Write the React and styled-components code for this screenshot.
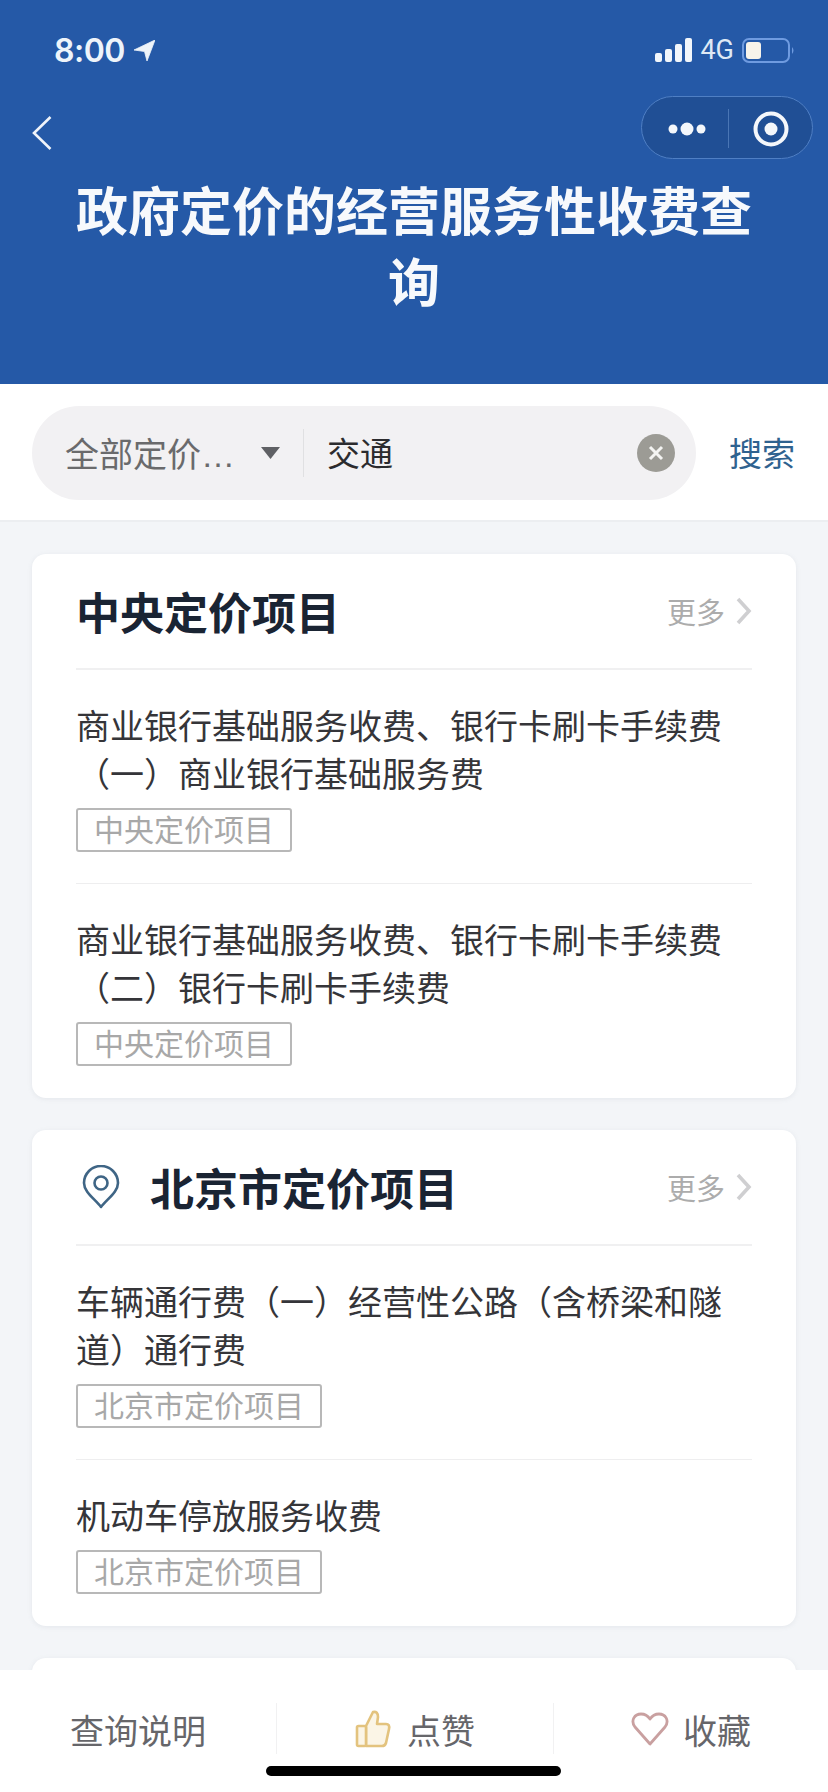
import React from 'react'
import styled, { createGlobalStyle } from 'styled-components'

const GlobalStyle = createGlobalStyle`
  * { box-sizing: border-box; }
  html, body { margin: 0; padding: 0; background: #fff; }
  body { font-family: "Liberation Sans", "Noto Sans CJK SC", sans-serif; }
`

const Page = styled.div`
  width: 828px;
  height: 1792px;
  display: flex;
  flex-direction: column;
  overflow: hidden;
  background: #f3f5f8;
`

const Header = styled.header`
  height: 384px;
  flex: none;
  padding-top: 30px;
  background: #2559a7;
  color: #fff;
`

const StatusBar = styled.div`
  height: 40px;
  padding: 0 33px 0 54px;
  display: flex;
  align-items: center;
  justify-content: space-between;
`

const Clock = styled.div`
  display: flex;
  align-items: center;
  gap: 9px;
  font-family: Inter, sans-serif;
  font-size: 32px;
  font-weight: 600;
  letter-spacing: -0.5px;
  color: #eef4fa;
`

const StatusIcons = styled.div`
  display: flex;
  align-items: center;
  gap: 8px;
  font-family: Roboto, sans-serif;
  font-size: 27px;
  color: #dfe9f5;
`

const NavBar = styled.div`
  height: 63px;
  margin-top: 26px;
  padding: 0 15px 0 32px;
  display: flex;
  align-items: center;
  justify-content: space-between;
`

const BackButton = styled.div`
  display: flex;
  padding-top: 11px;
`

const Capsule = styled.div`
  width: 172px;
  height: 63px;
  padding-top: 2px;
  display: flex;
  align-items: center;
  border: 1px solid #4f7fc4;
  border-radius: 32px;
  background: #204f95;
`

const CapsuleSide = styled.div`
  flex: 1;
  height: 39px;
  display: flex;
  align-items: center;
  justify-content: center;
  padding-left: ${props => (props.$divided ? '2px' : '4px')};
  border-left: ${props => (props.$divided ? '1px solid #4a76b5' : 'none')};
`

const Title = styled.h1`
  margin: 19px 0 0;
  padding: 0 64px;
  font-size: 52px;
  line-height: 71px;
  font-weight: 700;
  text-align: center;
  color: #f7f9fc;
`

const SearchSection = styled.div`
  height: 138px;
  flex: none;
  padding: 22px 33px 0 32px;
  display: flex;
  align-items: flex-start;
  justify-content: space-between;
  background: #fff;
  border-bottom: 2px solid #eceef1;
`

const SearchPill = styled.div`
  width: 664px;
  height: 94px;
  padding: 0 21px 0 33px;
  display: flex;
  align-items: center;
  border-radius: 47px;
  background: #f2f1f3;
`

const ScopeText = styled.span`
  padding-bottom: 2px;
  font-size: 34px;
  color: #6a6a6c;
  white-space: nowrap;
`

const SearchDivider = styled.div`
  width: 1px;
  height: 48px;
  margin: 0 23px;
  background: #e0e0e2;
`

const Keyword = styled.span`
  flex: 1;
  padding-bottom: 2px;
  font-size: 33px;
  color: #2b2b2e;
`

const ClearButton = styled.div`
  width: 38px;
  height: 38px;
  display: flex;
  align-items: center;
  justify-content: center;
  border-radius: 50%;
  background: #9c9b95;
`

const SearchLink = styled.span`
  height: 94px;
  padding-bottom: 2px;
  display: flex;
  align-items: center;
  font-size: 33px;
  color: #2f628f;
`

const Content = styled.main`
  flex: 1;
  min-height: 0;
  padding: 32px 32px 0;
  display: flex;
  flex-direction: column;
  gap: 32px;
  overflow: hidden;
`

const Card = styled.section`
  flex: none;
  min-height: ${props => (props.$stub ? '120px' : '0')};
  padding: 0 44px;
  border-radius: 14px;
  background: #fff;
  box-shadow: 0 1px 5px rgba(120, 130, 150, 0.12);
`

const CardHead = styled.div`
  height: 116px;
  display: flex;
  align-items: center;
  border-bottom: 2px solid #f0f0f1;
`

const CardTitle = styled.h2`
  flex: 1;
  margin: 0;
  font-size: 44px;
  font-weight: 700;
  color: #1a2433;
`

const PinWrap = styled.div`
  width: 74px;
  height: 44px;
  padding-left: 6px;
  flex: none;
`

const More = styled.div`
  display: flex;
  align-items: center;
  gap: 11px;
  font-size: 29px;
  color: #acacac;
`

const Item = styled.div`
  padding: 33px 0 31px;
  border-top: ${props => (props.$first ? 'none' : '1px solid #eeeeef')};

  &:last-child {
    padding-bottom: 32px;
  }
`

const ItemText = styled.div`
  font-size: 34px;
  line-height: 48px;
  color: #353539;
`

const Tag = styled.div`
  width: fit-content;
  height: 44px;
  margin-top: 9px;
  padding: 0 16px 4px;
  display: flex;
  align-items: center;
  font-size: 30px;
  color: #a8a8a8;
  border: 2px solid #b8b8b8;
  border-radius: 3px;
`

const BottomBar = styled.footer`
  height: 122px;
  flex: none;
  padding-top: 33px;
  background: #fff;
`

const Actions = styled.div`
  height: 49px;
  display: grid;
  grid-template-columns: 276px 277px 275px;
`

const Action = styled.div`
  display: flex;
  align-items: center;
  justify-content: center;
  gap: ${props => props.$gap || 14}px;
  font-size: 34px;
  color: #66666a;
  border-left: ${props => (props.$divided ? '1px solid #f1f1f2' : 'none')};
`

const ActionLabel = styled.span`
  padding-top: 2px;
`

const HomeIndicator = styled.div`
  width: 295px;
  height: 10px;
  margin: 14px auto 0 266px;
  border-radius: 5px;
  background: #000;
`

const ArrowIcon = () => (
  <svg width="21" height="21" viewBox="0 0 21 21">
    <path d="M21 0 L0 10 L10.5 11.5 L13 21 Z" fill="#eef4fa" stroke="#eef4fa" strokeWidth="0.8" strokeLinejoin="round" />
  </svg>
)

const SignalIcon = () => (
  <svg width="37" height="24" viewBox="0 0 37 24">
    <rect x="0" y="15" width="7" height="9" rx="2" fill="#f2f6fb" />
    <rect x="10" y="11" width="7" height="13" rx="2" fill="#f2f6fb" />
    <rect x="20" y="6" width="7" height="18" rx="2" fill="#f2f6fb" />
    <rect x="30" y="0" width="7" height="24" rx="2" fill="#f2f6fb" />
  </svg>
)

const BatteryIcon = () => (
  <svg width="53" height="25" viewBox="0 0 53 25">
    <rect x="1" y="1" width="46" height="23" rx="6" fill="none" stroke="#6f9be0" strokeWidth="2" />
    <rect x="4" y="4" width="15" height="17" rx="3" fill="#f7f3ea" />
    <path d="M50 9 Q53 12.5 50 16 Z" fill="#6f9be0" />
  </svg>
)

const BackIcon = () => (
  <svg width="20" height="34" viewBox="0 0 20 34">
    <path d="M18.5 1 L2 17 L18.5 33" fill="none" stroke="#f0f4fa" strokeWidth="2.6" />
  </svg>
)

const DotsIcon = () => (
  <svg width="38" height="14" viewBox="0 0 38 14">
    <circle cx="5" cy="7" r="4.5" fill="#f4f7fb" />
    <circle cx="19" cy="7" r="6.5" fill="#f4f7fb" />
    <circle cx="33" cy="7" r="4.5" fill="#f4f7fb" />
  </svg>
)

const TargetIcon = () => (
  <svg width="36" height="36" viewBox="0 0 36 36">
    <circle cx="18" cy="18" r="15.5" fill="none" stroke="#f4f7fb" strokeWidth="4" />
    <circle cx="18" cy="18" r="6.5" fill="#f4f7fb" />
  </svg>
)

const CaretIcon = () => (
  <svg width="19" height="12" viewBox="0 0 19 12" style={{ marginLeft: 26, flex: 'none' }}>
    <path d="M0 0 H19 L9.5 12 Z" fill="#5f6064" />
  </svg>
)

const ClearIcon = () => (
  <svg width="18" height="18" viewBox="0 0 18 18">
    <path d="M3 3 L15 15 M15 3 L3 15" stroke="#f4f4f2" strokeWidth="3" />
  </svg>
)

const ChevronIcon = () => (
  <svg width="16" height="28" viewBox="0 0 16 28">
    <path d="M2 2 L13 14 L2 26" fill="none" stroke="#cfcfd1" strokeWidth="3.6" />
  </svg>
)

const PinIcon = () => (
  <svg width="38" height="44" viewBox="0 0 38 44">
    <path
      d="M19 42 C13 34 2 27 2 18 A17 17 0 0 1 36 18 C36 27 25 34 19 42 Z"
      fill="none"
      stroke="#3f6585"
      strokeWidth="2.6"
      strokeLinejoin="round"
    />
    <circle cx="19" cy="18" r="6.5" fill="none" stroke="#3f6585" strokeWidth="2.6" />
  </svg>
)

const ThumbIcon = () => (
  <svg width="36" height="38" viewBox="0 0 36 38">
    <path
      d="M11 16 L18 2 Q23 1 23 7 L22 14 H31 Q35 14 34 19 L31 33 Q30 36 27 36 H11 Z"
      fill="#fbf5e6"
      stroke="#e3c37e"
      strokeWidth="2.6"
      strokeLinejoin="round"
    />
    <rect x="2" y="16" width="9" height="20" rx="1.5" fill="#fbf5e6" stroke="#e3c37e" strokeWidth="2.6" />
  </svg>
)

const HeartIcon = () => (
  <svg width="38" height="34" viewBox="0 0 38 34">
    <path
      d="M19 32 L4 15 C-1 8 4 2 10 2 C14 2 17 4 19 7 C21 4 24 2 28 2 C34 2 39 8 34 15 Z"
      fill="none"
      stroke="#c9a0a0"
      strokeWidth="2.8"
      strokeLinejoin="round"
    />
  </svg>
)

const sections = [
  {
    title: '中央定价项目',
    items: [
      '商业银行基础服务收费、银行卡刷卡手续费（一）商业银行基础服务费',
      '商业银行基础服务收费、银行卡刷卡手续费（二）银行卡刷卡手续费',
    ],
  },
  {
    title: '北京市定价项目',
    pin: true,
    items: ['车辆通行费（一）经营性公路（含桥梁和隧道）通行费', '机动车停放服务收费'],
  },
]

const App = () => {
  return (
    <Page>
      <GlobalStyle />
      <Header>
        <StatusBar>
          <Clock>
            8:00
            <ArrowIcon />
          </Clock>
          <StatusIcons>
            <SignalIcon />
            4G
            <BatteryIcon />
          </StatusIcons>
        </StatusBar>
        <NavBar>
          <BackButton>
            <BackIcon />
          </BackButton>
          <Capsule>
            <CapsuleSide>
              <DotsIcon />
            </CapsuleSide>
            <CapsuleSide $divided>
              <TargetIcon />
            </CapsuleSide>
          </Capsule>
        </NavBar>
        <Title>政府定价的经营服务性收费查询</Title>
      </Header>

      <SearchSection>
        <SearchPill>
          <ScopeText>全部定价…</ScopeText>
          <CaretIcon />
          <SearchDivider />
          <Keyword>交通</Keyword>
          <ClearButton>
            <ClearIcon />
          </ClearButton>
        </SearchPill>
        <SearchLink>搜索</SearchLink>
      </SearchSection>

      <Content>
        {sections.map(section => (
          <Card key={section.title}>
            <CardHead>
              {section.pin && (
                <PinWrap>
                  <PinIcon />
                </PinWrap>
              )}
              <CardTitle>{section.title}</CardTitle>
              <More>
                更多
                <ChevronIcon />
              </More>
            </CardHead>
            {section.items.map((item, i) => (
              <Item key={item} $first={i === 0}>
                <ItemText>{item}</ItemText>
                <Tag>{section.title}</Tag>
              </Item>
            ))}
          </Card>
        ))}
        <Card $stub />
      </Content>

      <BottomBar>
        <Actions>
          <Action>
            <ActionLabel>查询说明</ActionLabel>
          </Action>
          <Action $divided $gap={16}>
            <ThumbIcon />
            <ActionLabel>点赞</ActionLabel>
          </Action>
          <Action $divided>
            <HeartIcon />
            <ActionLabel>收藏</ActionLabel>
          </Action>
        </Actions>
        <HomeIndicator />
      </BottomBar>
    </Page>
  )
}

export default App
